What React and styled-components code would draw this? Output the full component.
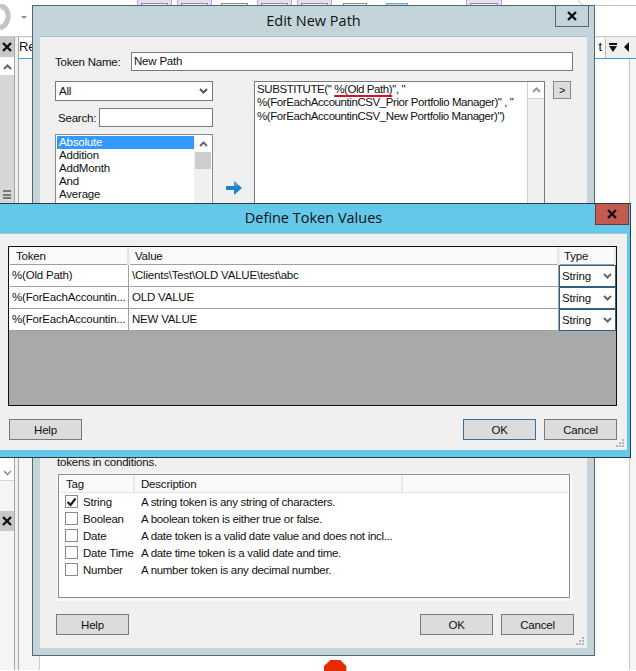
import React from "react";
import styled, { createGlobalStyle } from "styled-components";

const Global = createGlobalStyle`
  html, body { margin: 0; padding: 0; background: #fff; }
  * { box-sizing: border-box; }
  body {
    font-family: "Liberation Sans", Arial, sans-serif;
    font-size: 11.5px;
    letter-spacing: -0.2px;
    color: #111;
  }
`;

const Desktop = styled.div`
  position: relative;
  width: 636px;
  height: 671px;
  overflow: hidden;
  background: #fff;
`;

/* ---------- application behind the dialogs ---------- */
const TopStrip = styled.div`
  height: 37px;
  display: flex;
  align-items: flex-start;
  border-bottom: 1px solid #c8c8c8;
`;
const Swirl = styled.svg`
  width: 12px;
  height: 30px;
  flex: none;
`;
const Caret = styled.div`
  width: 0;
  height: 0;
  margin: 16px 0 0 9px;
  border-left: 3px solid transparent;
  border-right: 3px solid transparent;
  border-top: 3px solid #8a8a8a;
`;
const Thumbs = styled.div`
  display: flex;
  margin-left: 110px;
  gap: 5px;
`;
const Thumb = styled.div`
  width: ${(p) => p.$w || 35}px;
  margin-left: ${(p) => p.$ml || 0}px;
  height: 16px;
  padding: 3px 3px 0;
  background: ${(p) => (p.$on ? "#e6ddf4" : "#fff")};
  border-left: 1px solid ${(p) => (p.$on ? "#c09ae0" : "#fff")};
  border-right: 1px solid ${(p) => (p.$on ? "#c09ae0" : "#fff")};
  &::after {
    content: "";
    display: block;
    height: 10px;
    background: ${(p) => p.$fill || "#eef0f2"};
    border: 1px solid ${(p) => p.$line || "#8a8f96"};
  }
`;
const Pill = styled.div`
  position: absolute;
  left: 578px;
  top: -10px;
  width: 70px;
  height: 16px;
  background: #fff;
  border: 1px solid #c4c4c4;
  border-radius: 7px;
`;
const Workspace = styled.div`
  display: flex;
  height: 633px;
`;
const Dock = styled.div`
  width: 15px;
  flex: none;
  display: flex;
  flex-direction: column;
  background: #f5f5f5;
  border-right: 1px solid #a8a8a8;
`;
const DockClose = styled.div`
  height: 20px;
  display: flex;
  align-items: center;
  justify-content: center;
  background: #c8c8c8;
`;
const DockUp = styled.div`
  height: 17px;
  margin-top: 1px;
  display: flex;
  align-items: center;
  justify-content: center;
  background: #fff;
`;
const DockTrack = styled.div`
  height: 128px;
  display: flex;
  align-items: flex-end;
  justify-content: center;
  padding-bottom: 4px;
  background: #d6d6d6;
`;
const Hamburger = styled.div`
  width: 8px;
  height: 9px;
  background: repeating-linear-gradient(#7a7a7a 0 2px, transparent 2px 3.5px);
`;
const DockHidden = styled.div`
  height: 254px;
`;
const DockDown = styled.div`
  height: 24px;
  display: flex;
  align-items: flex-end;
  justify-content: center;
  padding-bottom: 4px;
  background: #fff;
  border-bottom: 1px solid #d8d8d8;
`;
const DockGap = styled.div`
  height: 30px;
`;
const Sash = styled.div`
  width: 4px;
  flex: none;
  background: #f0f0f0;
  border-right: 1px solid #a8a8a8;
`;
const Main = styled.div`
  flex: 1;
  display: flex;
  flex-direction: column;
`;
const TabBar = styled.div`
  height: 22px;
  flex: none;
  display: flex;
  align-items: flex-end;
  justify-content: space-between;
  background: #f0f0f0;
  border-bottom: 1px solid #3d9be0;
`;
const Tab = styled.div`
  width: 40px;
  height: 20px;
  line-height: 18px;
  font-size: 13px;
  background: #fff;
  color: #111;
`;
const TabRight = styled.div`
  display: flex;
  align-items: center;
  height: 22px;
`;
const TabEnd = styled.div`
  width: 40px;
  height: 20px;
  align-self: flex-end;
  line-height: 18px;
  font-size: 13px;
  text-align: right;
  padding-right: 3px;
  background: #fff;
  border-right: 1px solid #bbb;
  border-top-right-radius: 3px;
`;
const TabTools = styled.div`
  width: 30px;
  display: flex;
  align-items: center;
  gap: 7px;
  padding-left: 3px;
`;
const Filter = styled.div`
  width: 8px;
  height: 9px;
  border-top: 2px solid #111;
  position: relative;
  &::after {
    content: "";
    position: absolute;
    left: 0;
    top: 1px;
    border-left: 4px solid transparent;
    border-right: 4px solid transparent;
    border-top: 6px solid #111;
  }
`;
const Left = styled.div`
  width: 0;
  height: 0;
  border-top: 5px solid transparent;
  border-bottom: 5px solid transparent;
  border-right: 5px solid #111;
`;
const Canvas = styled.div`
  flex: 1;
  display: flex;
  position: relative;
`;
const CanvasLeft = styled.div`
  width: 21px;
  background: #f5f5f5;
  border-right: 1px solid #d0d0d0;
`;
const CanvasBody = styled.div`
  flex: 1;
  background: #fff;
`;
const RightEdge = styled.div`
  width: 7px;
  flex: none;
  background: #f5f5f5;
  border-left: 1px solid #c8c8c8;
`;
const StopIcon = styled.svg`
  position: absolute;
  left: 324px;
  top: 659px;
  width: 24px;
  height: 24px;
`;

/* ---------- dialogs ---------- */
const Dialog = styled.div`
  position: absolute;
  left: ${(p) => p.$x}px;
  top: ${(p) => p.$y}px;
  width: ${(p) => p.$w}px;
  height: ${(p) => p.$h}px;
  display: flex;
  flex-direction: column;
  background: ${(p) => p.$frame};
  border: 1px solid ${(p) => p.$edge};
  padding: 0 ${(p) => p.$pr}px ${(p) => p.$pb}px ${(p) => p.$pl}px;
`;
const TitleBar = styled.div`
  flex: none;
  height: ${(p) => p.$h}px;
  display: flex;
  align-items: center;
  justify-content: center;
  font-family: "Open Sans", sans-serif;
  font-size: 14.5px;
  letter-spacing: 0;
  color: #111;
  padding-bottom: 2px;
`;
const CloseBtn = styled.div`
  position: absolute;
  top: 0;
  right: ${(p) => p.$r}px;
  width: 34px;
  height: 21px;
  display: flex;
  align-items: center;
  justify-content: center;
  background: ${(p) => p.$bg || "transparent"};
  border: 1px solid ${(p) => p.$line};
  border-top: none;
`;
const Panel = styled.div`
  flex: 1;
  min-height: 0;
  position: relative;
  background: #f0f0f0;
  border-top: 1px solid ${(p) => p.$top || "#f0f0f0"};
  display: flex;
  flex-direction: column;
`;
const Grip = styled.svg`
  position: absolute;
  right: 2px;
  bottom: 2px;
  width: 10px;
  height: 10px;
`;

/* edit dialog form */
const FormBody = styled.div`
  height: 419px;
  flex: none;
  overflow: hidden;
  padding: 15px 14px 0 15px;
`;
const NameRow = styled.div`
  display: flex;
  align-items: center;
  height: 19px;
`;
const FieldLabel = styled.label`
  width: ${(p) => p.$w}px;
  padding-left: ${(p) => p.$pl || 0}px;
  flex: none;
`;
const TextBox = styled.div`
  flex: 1;
  height: 19px;
  line-height: 17px;
  padding-left: 2px;
  background: #fff;
  border: 1px solid #7a7a7a;
`;
const Columns = styled.div`
  display: flex;
  margin-top: 10px;
`;
const LeftCol = styled.div`
  width: 158px;
  flex: none;
  display: flex;
  flex-direction: column;
`;
const ComboBox = styled.div`
  height: 20px;
  display: flex;
  align-items: center;
  justify-content: space-between;
  padding: 0 4px 0 3px;
  background: #fff;
  border: 1px solid #7a7a7a;
`;
const SearchRow = styled.div`
  display: flex;
  align-items: center;
  margin-top: 7px;
  height: 19px;
`;
const ListBox = styled.div`
  margin-top: 7px;
  height: 120px;
  display: flex;
  padding: 1px;
  background: #fff;
  border: 1px solid #8a8a8a;
`;
const ListItems = styled.div`
  flex: 1;
  line-height: 13px;
`;
const ListItem = styled.div`
  height: 13px;
  padding-left: 2px;
  color: ${(p) => (p.$on ? "#fff" : "#111")};
  background: ${(p) => (p.$on ? "#3399ff" : "transparent")};
`;
const Scroll = styled.div`
  width: 17px;
  flex: none;
  display: flex;
  flex-direction: column;
  background: #f0f0f0;
  border-left: 1px solid ${(p) => p.$edge || "transparent"};
`;
const ScrollUp = styled.div`
  height: 17px;
  display: flex;
  align-items: center;
  justify-content: center;
  background: #fff;
  border-bottom: 1px solid #cfcfcf;
`;
const ScrollThumb = styled.div`
  height: 16px;
  background: #cdcdcd;
`;
const ArrowCol = styled.div`
  width: 41px;
  flex: none;
  padding: 100px 0 0 13px;
`;
const Editor = styled.div`
  width: 291px;
  height: 160px;
  flex: none;
  display: flex;
  justify-content: space-between;
  background: #fff;
  border: 1px solid #7a7a7a;
  border-bottom: none;
`;
const EditorText = styled.div`
  flex: 1;
  padding: 1px 0 0 2px;
  line-height: 13.3px;
  letter-spacing: -0.42px;
  white-space: pre;
`;
const Squiggle = styled.span`
  text-decoration: underline;
  text-decoration-color: #d8102c;
  text-decoration-thickness: 2px;
  text-underline-offset: 2px;
`;
const MoreBtn = styled.div`
  width: 18px;
  height: 18px;
  margin-left: 8px;
  flex: none;
  display: flex;
  align-items: center;
  justify-content: center;
  background: #dcdcdc;
  border: 1px solid #8a8a8a;
  font-size: 11px;
`;
const Hint = styled.div`
  flex: none;
  height: 12px;
  line-height: 12px;
  padding-left: 17px;
`;
const TagBox = styled.div`
  flex: none;
  height: 124px;
  margin: 6px 17px 0 18px;
  padding: 1px;
  background: #fff;
  border: 1px solid #8a8a96;
  box-shadow: 1px 1px 0 2px #f8f8f8;
`;
const TagHead = styled.div`
  display: flex;
  height: 17px;
  background: #fafafa;
  border-bottom: 1px solid #e4e4e4;
  line-height: 17px;
`;
const HeadCell = styled.div`
  width: ${(p) => p.$w}px;
  padding-left: ${(p) => p.$pl}px;
  border-right: 2px solid #e8e8e8;
  flex: none;
`;
const TagList = styled.div``;
const TagRow = styled.div`
  display: flex;
  align-items: center;
  height: 17px;
`;
const Check = styled.div`
  width: 13px;
  height: 13px;
  margin-left: 5px;
  flex: none;
  display: flex;
  align-items: center;
  justify-content: center;
  background: #fff;
  border: 1px solid #8a8a8a;
`;
const TagName = styled.div`
  width: 63px;
  padding-left: 5px;
  flex: none;
  white-space: nowrap;
`;
const TagDesc = styled.div`
  letter-spacing: -0.3px;
`;
const ButtonRow = styled.div`
  display: flex;
  padding: ${(p) => p.$pad};
`;
const Button = styled.div`
  width: ${(p) => p.$w || 73}px;
  height: 21px;
  flex: none;
  margin-left: ${(p) => p.$ml || 0}px;
  display: flex;
  align-items: center;
  justify-content: center;
  background: #dcdcdc;
  border: 1px solid ${(p) => (p.$focus ? "#3b6f9e" : "#7a7a7a")};
`;

/* define token values */
const Grid = styled.div`
  height: 160px;
  margin: 12px 10px 0 8px;
  background: #a9a9a9;
  border: 1px solid #111;
  display: flex;
  flex-direction: column;
`;
const GridHead = styled.div`
  display: grid;
  grid-template-columns: 120px 430px 57px;
  height: 18px;
  background: #fafafa;
  border-bottom: 1px solid #a0a0a0;
  line-height: 19px;
`;
const GridHeadCell = styled.div`
  padding-left: ${(p) => p.$pl}px;
  border-right: 2px solid #e6e6e6;
  border-left: 1px solid #f0f0f0;
`;
const GridRow = styled.div`
  display: grid;
  grid-template-columns: 120px 430px 57px;
  height: 22px;
  background: #fff;
`;
const GridCell = styled.div`
  padding-left: ${(p) => p.$pl}px;
  line-height: 21px;
  border-right: 1px solid #a0a0a0;
  border-bottom: 1px solid #a0a0a0;
  white-space: nowrap;
  overflow: hidden;
`;
const TypeCell = styled.div`
  display: flex;
  align-items: center;
  justify-content: space-between;
  height: 22px;
  padding: 0 3px 0 2px;
  background: #fff;
  border: 1px solid #2f5f85;
`;
const Spacer = styled.div`
  flex: 1;
`;

const Cross = ({ size = 10 }) => (
  <svg width={size} height={size} viewBox="0 0 10 10">
    <path d="M1 1 L9 9 M9 1 L1 9" stroke="#111" strokeWidth="2.4" fill="none" />
  </svg>
);
const Chev = ({ up, color = "#666", w = 9, sw = 2 }) => (
  <svg width={w} height="6" viewBox="0 0 9 6">
    <path d={up ? "M1 5 L4.5 1.5 L8 5" : "M1 1 L4.5 4.5 L8 1"} stroke={color} strokeWidth={sw} fill="none" />
  </svg>
);
const GripIcon = () => (
  <Grip viewBox="0 0 10 10">
    <path d="M7 1h2v2H7zM4 4h2v2H4zM7 4h2v2H7zM1 7h2v2H1zM4 7h2v2H4zM7 7h2v2H7z" fill="#b4b4b4" />
  </Grip>
);

const tags = [
  ["String", "A string token is any string of characters.", true],
  ["Boolean", "A boolean token is either true or false."],
  ["Date", "A date token is a valid date value and does not incl..."],
  ["Date Time", "A date time token is a valid date and time."],
  ["Number", "A number token is any decimal number."],
];
const values = [
  ["%(Old Path)", "\\Clients\\Test\\OLD VALUE\\test\\abc"],
  ["%(ForEachAccountin...", "OLD VALUE"],
  ["%(ForEachAccountin...", "NEW VALUE"],
];

export default function App() {
  return (
    <Desktop>
      <Global />
      <TopStrip>
        <Swirl viewBox="0 0 12 30">
          <path d="M0 7 C5 5 9 12 8 18 C7 24 3 27 0 28" stroke="#c4c4c4" strokeWidth="5" fill="none" />
        </Swirl>
        <Caret />
        <Thumbs>
          <Thumb $on />
          <Thumb $on />
          <Thumb />
          <Thumb $on />
          <Thumb $on />
          <Thumb $w={32} $ml={2} />
          <Thumb $w={30} $ml={6} $fill="#bcdcf4" $line="#6aa8dc" />
          <Thumb $w={36} $ml={49} $on />
        </Thumbs>
      </TopStrip>
      <Pill />
      <Workspace>
        <Dock>
          <DockClose><Cross /></DockClose>
          <DockUp><Chev up /></DockUp>
          <DockTrack><Hamburger /></DockTrack>
          <DockHidden />
          <DockDown><Chev color="#888" sw={1.5} /></DockDown>
          <DockGap />
          <DockClose><Cross /></DockClose>
        </Dock>
        <Sash />
        <Main>
          <TabBar>
            <Tab>Re</Tab>
            <TabRight>
              <TabEnd>t</TabEnd>
              <TabTools><Filter /><Left /></TabTools>
            </TabRight>
          </TabBar>
          <Canvas>
            <CanvasLeft />
            <CanvasBody />
            <RightEdge />
          </Canvas>
        </Main>
      </Workspace>
      <StopIcon viewBox="0 0 24 24">
        <path d="M7 1 H17 L23 7 V24 H1 V7 Z" fill="#c8c8c8" />
        <path d="M6.5 1 H16 L22 7 V24 H0 V7 Z" fill="#e82a00" />
      </StopIcon>

      <Dialog $x={32} $y={5} $w={563} $h={651} $frame="#c3d5db" $edge="#56666e" $pl={7} $pr={7} $pb={7}>
        <TitleBar $h={30}>Edit New Path</TitleBar>
        <CloseBtn $r={5} $line="#56666e"><Cross /></CloseBtn>
        <Panel $top="#a9bcc4">
          <FormBody>
            <NameRow>
              <FieldLabel $w={76}>Token Name:</FieldLabel>
              <TextBox>New Path</TextBox>
            </NameRow>
            <Columns>
              <LeftCol>
                <ComboBox>All<Chev color="#555" /></ComboBox>
                <SearchRow>
                  <FieldLabel $w={44} $pl={3}>Search:</FieldLabel>
                  <TextBox />
                </SearchRow>
                <ListBox>
                  <ListItems>
                    <ListItem $on>Absolute</ListItem>
                    <ListItem>Addition</ListItem>
                    <ListItem>AddMonth</ListItem>
                    <ListItem>And</ListItem>
                    <ListItem>Average</ListItem>
                    <ListItem>Ceiling</ListItem>
                  </ListItems>
                  <Scroll>
                    <ScrollUp><Chev up /></ScrollUp>
                    <ScrollThumb />
                  </Scroll>
                </ListBox>
              </LeftCol>
              <ArrowCol>
                <svg width="16" height="14" viewBox="0 0 16 14">
                  <path d="M0 5 H8 V0 L16 7 L8 14 V9 H0 Z" fill="#1a86c8" />
                  <path d="M0 5 H8 V0 L12 3.5 V5 H0 Z" fill="#3aa6e0" />
                </svg>
              </ArrowCol>
              <Editor>
                <EditorText>
                  {'SUBSTITUTE(" '}<Squiggle>%(Old Path)</Squiggle>{'", "\n%(ForEachAccountinCSV_Prior Portfolio Manager)" , "\n%(ForEachAccountinCSV_New Portfolio Manager)")'}
                </EditorText>
                <Scroll $edge="#d0d0d0">
                  <ScrollUp><Chev up color="#999" /></ScrollUp>
                </Scroll>
              </Editor>
              <MoreBtn>&gt;</MoreBtn>
            </Columns>
          </FormBody>
          <Hint>tokens in conditions.</Hint>
          <TagBox>
            <TagHead>
              <HeadCell $w={75} $pl={6}>Tag</HeadCell>
              <HeadCell $w={268} $pl={6}>Description</HeadCell>
            </TagHead>
            <TagList>
              {tags.map(([name, desc, on]) => (
                <TagRow key={name}>
                  <Check>
                    {on && (
                      <svg width="11" height="10" viewBox="0 0 11 10">
                        <path d="M1.5 5 L4.5 8 L9.5 1.5" stroke="#222" strokeWidth="2.2" fill="none" />
                      </svg>
                    )}
                  </Check>
                  <TagName>{name}</TagName>
                  <TagDesc>{desc}</TagDesc>
                </TagRow>
              ))}
            </TagList>
          </TagBox>
          <ButtonRow $pad="16px 0 0 16px">
            <Button>Help</Button>
            <Button $ml={291}>OK</Button>
            <Button $ml={8}>Cancel</Button>
          </ButtonRow>
          <GripIcon />
        </Panel>
      </Dialog>

      <Dialog $x={-1} $y={203} $w={632} $h={255} $frame="#64c8ea" $edge="#2c3c44" $pl={0} $pr={3} $pb={7}>
        <TitleBar $h={29}>Define Token Values</TitleBar>
        <CloseBtn $r={1} $bg="#c25a50" $line="#6e3a34"><Cross /></CloseBtn>
        <Panel $top="#9fc6d6">
          <Grid>
            <GridHead>
              <GridHeadCell $pl={6}>Token</GridHeadCell>
              <GridHeadCell $pl={5}>Value</GridHeadCell>
              <GridHeadCell $pl={4}>Type</GridHeadCell>
            </GridHead>
            {values.map(([t, v], i) => (
              <GridRow key={i}>
                <GridCell $pl={3}>{t}</GridCell>
                <GridCell $pl={3}>{v}</GridCell>
                <TypeCell>String<Chev color="#666" /></TypeCell>
              </GridRow>
            ))}
            <Spacer />
          </Grid>
          <ButtonRow $pad="13px 0 0 9px">
            <Button>Help</Button>
            <Button $ml={381} $focus>OK</Button>
            <Button $ml={8}>Cancel</Button>
          </ButtonRow>
          <GripIcon />
        </Panel>
      </Dialog>
    </Desktop>
  );
}
